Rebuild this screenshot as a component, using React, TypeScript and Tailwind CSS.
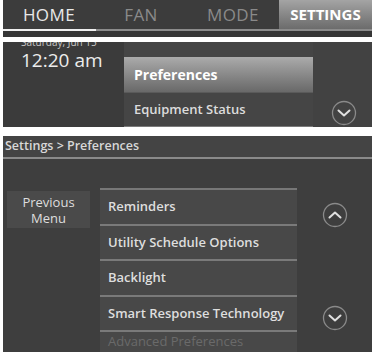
import React from 'react'

const font = { fontFamily: '"Open Sans", "Noto Sans", sans-serif' }

function ChevronCircle({ dir }: { dir: 'up' | 'down' }) {
  return (
    <svg width="26" height="26" viewBox="0 0 26 26">
      <circle cx="13" cy="13" r="11.5" fill="none" stroke="#8a8a8a" strokeWidth="1.3" />
      {dir === 'down' ? (
        <path d="M7.5 10.5 L13 15.5 L18.5 10.5" fill="none" stroke="#e0e0e0" strokeWidth="2" strokeLinecap="round" strokeLinejoin="round" />
      ) : (
        <path d="M7.5 15.5 L13 10.5 L18.5 15.5" fill="none" stroke="#e0e0e0" strokeWidth="2" strokeLinecap="round" strokeLinejoin="round" />
      )}
    </svg>
  )
}

const tabs = [
  { label: 'HOME', cls: 'text-[#e8e8e8]' },
  { label: 'FAN', cls: 'text-[#8a8a8a]' },
  { label: 'MODE', cls: 'text-[#8a8a8a]' },
]

const prefs = ['Reminders', 'Utility Schedule Options', 'Backlight', 'Smart Response Technology']

export default function App() {
  return (
    <div className="w-[374px] h-[352px] bg-white overflow-hidden flex flex-col" style={font}>
      {/* tab bar */}
      <div className="ml-[3px] w-[369px] bg-[#3c3c3c] flex flex-col">
        <div className="h-[29px] flex">
          {tabs.map((t) => (
            <div key={t.label} className={`w-[92px] flex items-center justify-center text-[17px] tracking-wide ${t.cls}`}>
              {t.label}
            </div>
          ))}
          <div className="flex-1 flex items-center justify-center text-[15px] font-bold text-white bg-gradient-to-b from-[#a4a4a4] to-[#6c6c6c]">
            SETTINGS
          </div>
        </div>
        <div className="h-[2px] flex">
          <div className="w-[93px] bg-[#f0f0f0]" />
          <div className="flex-1 bg-[#8c8c8c]" />
        </div>
        <div className="h-[6px] bg-[#363636]" />
      </div>

      {/* home screen */}
      <div className="mt-[5px] ml-[3px] w-[369px] h-[87px] bg-[#3b3b3b] flex overflow-hidden">
        <div className="w-[121px] flex flex-col pl-[18px]">
          <div className="text-[10px] leading-[12px] -mt-[6px] text-[#c8c8c8]">Saturday, Jun 15</div>
          <div className="text-[19px] leading-[22px] mt-[1px] text-[#ececec]">12:20 am</div>
        </div>
        <div className="w-[189px] bg-[#454545] flex flex-col pt-[15px]">
          <div className="h-[37px] bg-gradient-to-b from-[#ababab] to-[#696969] flex items-center pl-[10px] text-[14px] font-bold text-white border-b border-[#5a5a5a]">
            Preferences
          </div>
          <div className="h-[34px] flex items-center pl-[10px] text-[13px] font-semibold text-[#dcdcdc] border-b border-[#7a7a7a]">
            Equipment Status
          </div>
        </div>
        <div className="flex-1 bg-[#424242] flex items-end justify-center pb-[1px] pl-[3px]">
          <ChevronCircle dir="down" />
        </div>
      </div>

      {/* settings > preferences */}
      <div className="mt-[9px] ml-[3px] w-[369px] flex-1 bg-[#3e3e3e] flex flex-col">
        <div className="h-[21px] bg-[#444444] flex items-center pl-[2px] text-[12.5px] font-semibold text-[#d8d8d8]">
          Settings &gt; Preferences
        </div>
        <div className="h-[2px] bg-[#8a8a8a]" />
        <div className="flex pt-[29px]">
          <div className="w-[97px] pl-[4px] pt-[3px]">
            <div className="w-[83px] h-[37px] bg-[#4a4a4a] flex flex-col items-center justify-center text-[13px] leading-[16px] text-[#dedede]">
              <span>Previous</span>
              <span>Menu</span>
            </div>
          </div>
          <div className="w-[197px] border-t-2 border-[#777] flex flex-col">
            {prefs.map((p) => (
              <div key={p} className="h-[35.5px] bg-[#484848] flex items-center pl-[8px] text-[13px] font-semibold text-[#dedede] border-b-2 border-[#7a7a7a]">
                {p}
              </div>
            ))}
            <div className="h-[20px] bg-[#484848] pl-[8px] text-[13px] text-[#6a6a6a]">Advanced Preferences</div>
          </div>
          <div className="flex-1 flex flex-col items-center pt-[14px] gap-[77px]">
            <ChevronCircle dir="up" />
            <ChevronCircle dir="down" />
          </div>
        </div>
      </div>
    </div>
  )
}
